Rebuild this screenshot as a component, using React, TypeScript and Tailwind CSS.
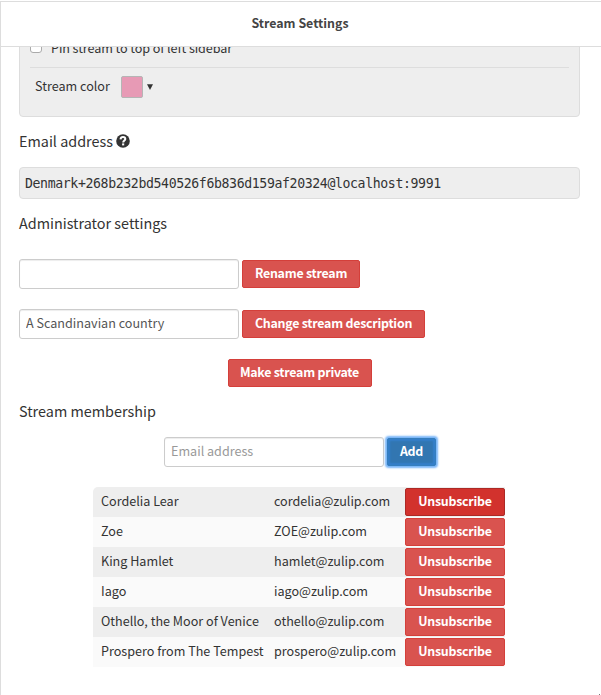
import React from "react";

const members = [
  { name: "Cordelia Lear", email: "cordelia@zulip.com", hover: true },
  { name: "Zoe", email: "ZOE@zulip.com" },
  { name: "King Hamlet", email: "hamlet@zulip.com" },
  { name: "Iago", email: "iago@zulip.com" },
  { name: "Othello, the Moor of Venice", email: "othello@zulip.com" },
  { name: "Prospero from The Tempest", email: "prospero@zulip.com" },
];

const inputClass =
  "block h-[30px] w-[220px] rounded-[3px] border border-[#ccc] bg-white px-1.5 pb-1 text-[12.6px] leading-5 text-[#555] shadow-[inset_0_1px_1px_rgba(0,0,0,0.075)] outline-none placeholder:text-[#999] placeholder:opacity-100";

function DangerButton({ children, width, active = false }: { children: React.ReactNode; width: string; active?: boolean }) {
  const color = active ? "border-[#ac2925] bg-[#d2322d]" : "border-[#d43f3a] bg-[#d9534f]";
  return (
    <button className={`h-7 shrink-0 whitespace-nowrap rounded-[2px] border pb-0.5 text-center text-[12.4px] font-bold leading-5 tracking-[-0.24px] text-white ${color} ${width}`}>
      {children}
    </button>
  );
}

function Heading({ children }: { children: React.ReactNode }) {
  return <h4 className="flex h-5 items-center text-[14.4px] leading-5">{children}</h4>;
}

export default function App() {
  return (
    <div className="flex h-[695px] w-[601px] flex-col overflow-hidden bg-white pt-px font-['Noto_Sans_CJK_SC',sans-serif] text-[12.6px] leading-5 text-[#333]">
      <div className="flex min-h-0 flex-1 flex-col border-l border-t border-[#ddd]">
        <header className="flex h-[45px] shrink-0 items-center justify-center border-b border-[#ddd] pb-0.5 pr-0.5 text-[12.4px] font-bold text-[#444]">
          Stream Settings
        </header>
        <main className="flex min-h-0 flex-1 flex-col overflow-hidden pl-[18px] pr-[21px]">
          <section className="-mt-3 h-[82px] shrink-0 rounded border border-[#ddd] bg-[#eee] px-2.5">
            <div className="flex h-8 items-start border-b border-[#ddd] pt-0.5">
              <span className="mt-[3px] h-3 w-3 rounded-[3px] border border-[#aaa] bg-white" />
              <span className="ml-[9px] tracking-[-0.08px]">Pin stream to top of left sidebar</span>
            </div>
            <div className="flex h-[38px] items-center pl-[5px]">
              <span className="w-[86px] pb-0.5">Stream color</span>
              <span className="h-[22px] w-[22px] rounded-[2px] border border-[#b5b5b5] bg-[#e79ab5]" />
              <svg className="ml-1" width="6" height="6" viewBox="0 0 6 6">
                <path d="M0 0.3h6L3 6z" fill="#333" />
              </svg>
            </div>
          </section>

          <div className="mt-[14px]">
            <Heading>
              <span>Email address</span>
              <svg className="ml-[3px]" width="14" height="14" viewBox="0 0 14 14">
                <circle cx="7" cy="7" r="6.8" fill="#333" />
                <path d="M4.5 5.3C4.7 3.8 5.7 3.1 7 3.1c1.4 0 2.3.8 2.3 1.9C9.3 6.5 7.2 6.6 7.2 8.5" fill="none" stroke="#fff" strokeWidth="2" />
                <path d="M6.1 9.4h2.1v2H6.1z" fill="#fff" />
              </svg>
            </Heading>
          </div>
          <div className="mt-4 flex h-8 shrink-0 items-center rounded border border-[#ddd] bg-[#eee] pl-[5px] pt-px font-['DejaVu_Sans_Mono',monospace] text-[13.2px] tracking-[-0.38px]">
            Denmark+268b232bd540526f6b836d159af20324@localhost:9991
          </div>

          <div className="mt-[14px]">
            <Heading>Administrator settings</Heading>
          </div>
          <div className="mt-[26px] flex items-center gap-[3px]">
            <input className={inputClass} />
            <DangerButton width="w-[118px]">Rename stream</DangerButton>
          </div>
          <div className="mt-5 flex items-center gap-[3px]">
            <input className={inputClass} defaultValue="A Scandinavian country" />
            <DangerButton width="w-[183px]">Change stream description</DangerButton>
          </div>
          <div className="mt-5 flex justify-center">
            <DangerButton width="w-[144px]">Make stream private</DangerButton>
          </div>

          <div className="mt-[14px]">
            <Heading>Stream membership</Heading>
          </div>
          <div className="mt-4 flex items-center gap-[3px] pl-[145px]">
            <input className={inputClass} placeholder="Email address" />
            <button className="h-7 w-[49px] rounded-[2px] border border-[#357ebd] bg-[#3276b1] pb-0.5 text-[12.4px] font-bold leading-5 tracking-[-0.24px] text-white shadow-[0_0_2px_2px_#78b5f8,inset_0_0_2px_2px_#347fcb]">
              Add
            </button>
          </div>

          <div className="ml-[74px] mt-5 w-[412px] shrink-0 overflow-hidden rounded-tl-[5px]">
            {members.map((member) => (
              <div key={member.email} className="grid h-[30px] grid-cols-[173px_139px_100px] items-center odd:bg-[#eee] even:bg-[#fafafa]">
                <span className="whitespace-nowrap pb-0.5 pl-2">{member.name}</span>
                <span className="whitespace-nowrap pb-0.5 pl-2">{member.email}</span>
                <DangerButton width="w-[100px]" active={member.hover}>Unsubscribe</DangerButton>
              </div>
            ))}
          </div>
          <span className="-mr-5 mt-auto h-px w-px self-end bg-[#777]" />
        </main>
      </div>
    </div>
  );
}
